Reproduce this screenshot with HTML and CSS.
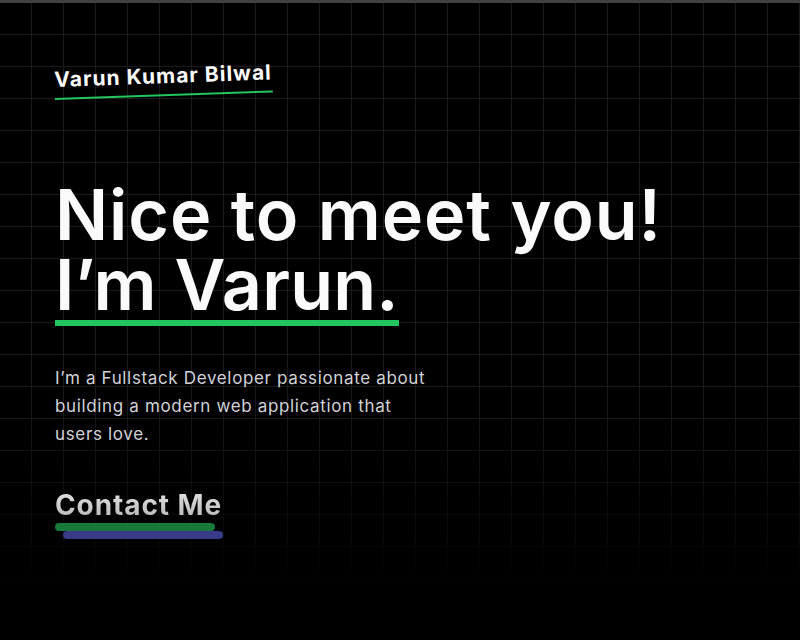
FILE: index.html
```html
<!DOCTYPE html>
<html lang="en">
<head>
<meta charset="utf-8">
<title>Varun Kumar Bilwal</title>
<link rel="stylesheet" href="styles.css">
</head>
<body>
<div class="topbar"></div>
<main class="hero">
  <div class="grid-bg"></div>
  <div class="content">
    <div class="brand"><span class="brand-name">Varun Kumar Bilwal</span></div>
    <h1 class="title"><span class="title-line">Nice to meet you!</span><span class="title-line"><span class="title-mark">I’m Varun.</span></span></h1>
    <p class="intro">I’m a Fullstack Developer passionate about building a modern web application that users love.</p>
    <a class="contact" href="#contact">
      <span class="contact-text">Contact Me</span>
      <span class="bar bar-green"></span>
      <span class="bar bar-blue"></span>
    </a>
  </div>
</main>
</body>
</html>
```

FILE: styles.css
```css
html, body {
  margin: 0;
  padding: 0;
  background: #000;
  height: 100%;
}
body {
  font-family: Inter, "Open Sans", sans-serif;
  color: #fafafa;
  overflow: hidden;
}
.topbar {
  height: 3px;
  background: #424242;
}
.hero {
  position: relative;
  height: 637px;
}
.grid-bg {
  position: absolute;
  inset: 0 0 45px 0;
  background-image:
    linear-gradient(to right, transparent 31px, #1b1b1b 31px),
    linear-gradient(to bottom, transparent 31px, #1b1b1b 31px);
  background-size: 32px 32px;
  -webkit-mask-image: linear-gradient(to bottom, #000 65%, transparent 100%);
  mask-image: linear-gradient(to bottom, #000 65%, transparent 100%);
}
.content {
  position: relative;
  display: flex;
  flex-direction: column;
  align-items: flex-start;
  padding: 64px 0 0 55px;
}
.brand {
  transform: rotate(-2deg);
  transform-origin: left bottom;
}
.brand-name {
  display: inline-block;
  font-size: 21px;
  font-weight: 700;
  line-height: 26px;
  letter-spacing: 1px;
  padding-bottom: 5px;
  border-bottom: 2px solid #22c55e;
}
.title {
  margin: 80px 0 0 0;
  display: flex;
  flex-direction: column;
  align-items: flex-start;
  font-size: 70px;
  line-height: 70px;
  font-weight: 600;
  letter-spacing: 0.9px;
  color: #fafafa;
}
.title-line {
  display: block;
  height: 70px;
}
.title-mark {
  display: inline-block;
  line-height: 70px;
  border-bottom: 6px solid #22c55e;
  letter-spacing: 0.2px;
}
.intro {
  margin: 44px 0 0 0;
  width: 378px;
  font-size: 17px;
  line-height: 28px;
  letter-spacing: 0.65px;
  color: #d2d2d8;
}
.contact {
  position: relative;
  margin-top: 40px;
  display: flex;
  flex-direction: column;
  text-decoration: none;
}
.contact-text {
  font-size: 28px;
  font-weight: 700;
  line-height: 34px;
  letter-spacing: 0.9px;
  background: linear-gradient(to bottom, #e6e6e6, #b4b4b4);
  -webkit-background-clip: text;
  background-clip: text;
  color: transparent;
}
.bar {
  display: block;
  height: 8px;
  width: 160px;
  border-radius: 4px;
}
.bar-green {
  margin-top: 1px;
  background: #177a3a;
}
.bar-blue {
  margin-top: 0;
  margin-left: 8px;
  background: #393a88;
}
```
